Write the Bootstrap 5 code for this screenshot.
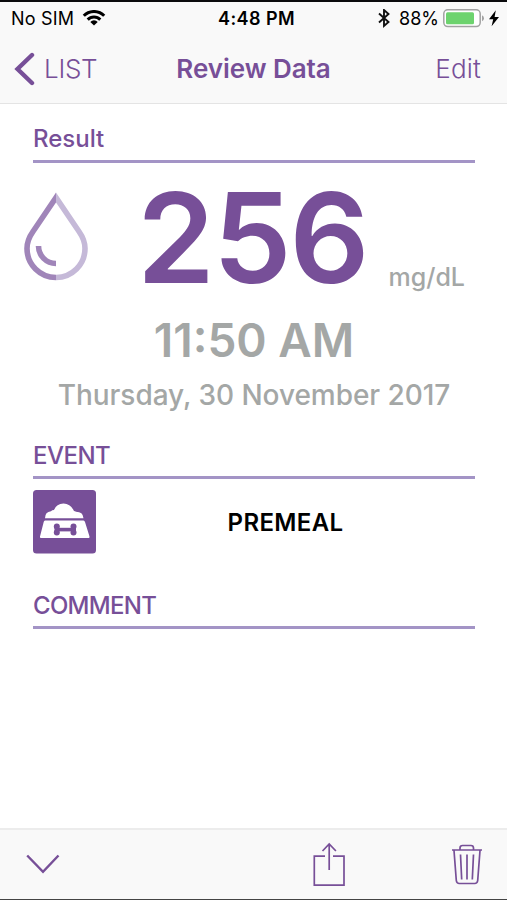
<!DOCTYPE html>
<html lang="en">
<head>
<meta charset="utf-8">
<meta name="viewport" content="width=device-width, initial-scale=1">
<title>Review Data</title>
<link href="https://cdn.jsdelivr.net/npm/bootstrap@5.3.0/dist/css/bootstrap.min.css" rel="stylesheet">
<style>
  :root { --plum: #774f98; --line: #a394c6; --bar: #f9f9f9; --ash: #a4a7a6; }
  body { font-family: Inter, "Liberation Sans", sans-serif; color: #000; }
  svg { display: block; flex: none; }
  .screen { height: 900px; border-top: 2px solid #0b0b0d; border-bottom: 1px solid #444; }
  .app-head { background: var(--bar); height: 102px; border-bottom: 1px solid #e4e4e4; }
  .status-row { height: 33px; padding: 0 8px 0 11px; font-size: 18px; line-height: 33px; }
  .side { flex: 1 1 0; }
  .carrier { letter-spacing: .2px; }
  .clock { font-weight: 600; letter-spacing: .45px; margin-left: 3px; }
  .title-row { height: 68px; padding: 0 14px; font-size: 26px; line-height: 34px; }
  .plum { color: var(--plum); }
  .back-link, .edit-link { color: var(--plum); text-decoration: none; font-weight: 300; }
  .back-link { letter-spacing: -.3px; }
  .back-link svg { margin-top: -1px; }
  .edit-link { margin-right: 12px; letter-spacing: .2px; }
  .page-title { font-size: 26px; line-height: 34px; font-weight: 600; letter-spacing: -.05px; }
  .section-title { height: 30px; line-height: 30px; font-size: 24px; font-weight: 500; color: var(--plum); }
  .rule { height: 3px; background: var(--line); margin-top: 6px; }
  .content { padding: 20px 32px 0 33px; }
  .reading { height: 150px; margin-left: -9px; }
  .value { font-size: 125px; line-height: 150px; font-weight: 600; color: var(--plum); margin-left: 48px; letter-spacing: -2px; }
  .unit { font-size: 25px; line-height: 30px; font-weight: 500; color: var(--ash); margin: 99px 0 0 21px; }
  .time { font-size: 46px; line-height: 54px; font-weight: 600; color: var(--ash); }
  .date { font-size: 28px; line-height: 34px; font-weight: 500; color: var(--ash); letter-spacing: -.05px; margin-top: 11px; }
  .event-title { margin-top: 29px; letter-spacing: -.5px; }
  .comment-title { margin-top: 26px; letter-spacing: -.7px; }
  .event-title + .rule, .comment-title + .rule { margin-top: 5px; }
  .event-row { height: 86px; padding-top: 11px; }
  .event-name { font-size: 24px; line-height: 65px; font-weight: 600; letter-spacing: .35px; }
  .toolbar { background: var(--bar); height: 71px; border-top: 2px solid #ececec; }
</style>
</head>
<body>
<div class="screen d-flex flex-column bg-white overflow-hidden">
  <header class="app-head">
    <div class="status-row d-flex align-items-center">
      <div class="side d-flex align-items-center">
        <span class="carrier">No SIM</span>
        <svg class="ms-2" width="24" height="18" viewBox="0 0 24 18" fill="none" stroke="#000" stroke-width="3"><path d="M1.800 5.800a14.200 14.200 0 0 1 20.400 0M5.700 9.600a8.800 8.800 0 0 1 12.600 0"/><path d="M12 15.600l-3.700-3.700a5.200 5.200 0 0 1 7.400 0z" fill="#000" stroke="none"/></svg>
      </div>
      <span class="clock">4:48 PM</span>
      <div class="side d-flex align-items-center justify-content-end">
        <svg width="12" height="20" viewBox="0 0 12 20" fill="none" stroke="#111" stroke-width="1.900"><path d="M1 4.500L10.500 13 6 17V1l4.500 4L1 13.500"/></svg>
        <span style="margin-left:9px">88%</span>
        <svg class="ms-1" width="42" height="20" viewBox="0 0 42 20"><rect x=".8" y=".8" width="36.400" height="16.800" rx="4" fill="#fff" stroke="#a2a2a2" stroke-width="1.500"/><rect x="3" y="3.200" width="28" height="12" rx="1.500" fill="#6dd36e"/><path d="M39 6.200v6q2-1 2-3t-2-3z" fill="#a2a2a2"/></svg>
        <svg style="margin:0 -1px 0 3px" width="12" height="18" viewBox="0 0 12 18"><path d="M7.800 .3L1 9.300h4.200L3.600 16.300 11 7H6.600z"/></svg>
      </div>
    </div>
    <nav class="title-row d-flex align-items-center">
      <div class="side d-flex"><a href="#" class="back-link d-flex align-items-center"><svg width="22" height="34" viewBox="0 0 22 34" fill="none" stroke="#774f98" stroke-width="4.400" stroke-linecap="round"><path d="M18 3L3.500 17 18 31"/></svg><span style="margin-left:8px">LIST</span></a></div>
      <h1 class="page-title plum m-0">Review Data</h1>
      <div class="side d-flex justify-content-end"><a href="#" class="edit-link">Edit</a></div>
    </nav>
  </header>

  <main class="content flex-grow-1">
    <h2 class="section-title m-0">Result</h2>
    <div class="rule"></div>
    <div class="reading d-flex">
      <svg width="65" height="92" viewBox="0 0 65 92" style="margin-top:27px" fill="none" stroke-width="5.600">
        <clipPath id="left-half"><path d="M0 0h32v92H0z"/></clipPath>
        <clipPath id="right-half"><path d="M32 0h33v92H32z"/></clipPath>
        <path clip-path="url(#left-half)" d="M32 7.500L9 41.500Q3 50 3 58.500a29 29 0 0 0 58 0Q61 50 55 41.500Z" stroke="#a085b9"/>
        <path clip-path="url(#right-half)" d="M32 7.500L9 41.500Q3 50 3 58.500a29 29 0 0 0 58 0Q61 50 55 41.500Z" stroke="#c5b9d8"/>
        <path d="M14.500 56A17.500 17.500 0 0 0 32 73.500" stroke="#a085b9"/>
      </svg>
      <span class="value">256</span>
      <span class="unit">mg/dL</span>
    </div>
    <div class="time text-center">11:50 AM</div>
    <div class="date text-center">Thursday, 30 November 2017</div>
    <h2 class="section-title event-title mb-0">EVENT</h2>
    <div class="rule"></div>
    <div class="event-row d-flex">
      <svg width="63" height="64" viewBox="0 0 63 64"><rect width="63" height="63.500" rx="3.500" fill="#774f98"/><path d="M12 28.200q0-6.500 6-7 1-1.200 3-1.200 2.500-6.500 9.500-6.500t10.500 7.500q1 0 2 .8 7 0 7.500 6.400z" fill="#fff"/><path d="M12 30.500h38.500q1 0 1.500 1.500l4.500 14.500q.3 1.500-1 1.500H8q-1.300 0-1-1.500L10.700 32q.3-1.500 1.300-1.500z" fill="#fff"/><g fill="#774f98"><path d="M24 37.800h17v3.600H24z"/><circle cx="23.800" cy="36.500" r="3"/><circle cx="23.800" cy="42.500" r="3"/><circle cx="40.500" cy="36.500" r="3"/><circle cx="40.500" cy="42.500" r="3"/><path d="M21.500 37h4v5h-4zM39 37h4v5h-4z"/></g></svg>
      <div class="event-name flex-grow-1 text-center">PREMEAL</div>
    </div>
    <h2 class="section-title comment-title mb-0">COMMENT</h2>
    <div class="rule"></div>
  </main>

  <footer class="toolbar d-flex">
    <svg width="34" height="22" viewBox="0 0 34 22" fill="none" stroke="#774f98" stroke-width="2.400" style="margin:23px 0 0 26px"><path d="M1.200 2.500L17 18.800 32.500 2.500"/></svg>
    <svg width="34" height="46" viewBox="0 0 34 46" fill="none" stroke="#774f98" stroke-width="1.700" style="margin:11px 0 0 252px"><path d="M13 15.200H2.300V44.200H32V15.200H21M17.200 29V3M10.500 10L17.200 3l6.700 7"/></svg>
    <svg width="34" height="44" viewBox="0 0 34 44" fill="none" stroke="#774f98" stroke-width="1.700" stroke-linejoin="round" style="margin:12px 0 0 104px"><path d="M2 8h30M10 7.500V6q0-2.500 2.500-2.500h8.500q2.500 0 2.500 2.500v1.500M4 8.500l2.300 30q.4 3 3 3h15.400q2.600 0 3-3L30 8.500M10.500 12.500l1.200 25M17 12.500v25M23.500 12.500l-1.200 25"/></svg>
  </footer>
</div>
<script src="https://cdn.jsdelivr.net/npm/bootstrap@5.3.0/dist/js/bootstrap.bundle.min.js"></script>
</body>
</html>
